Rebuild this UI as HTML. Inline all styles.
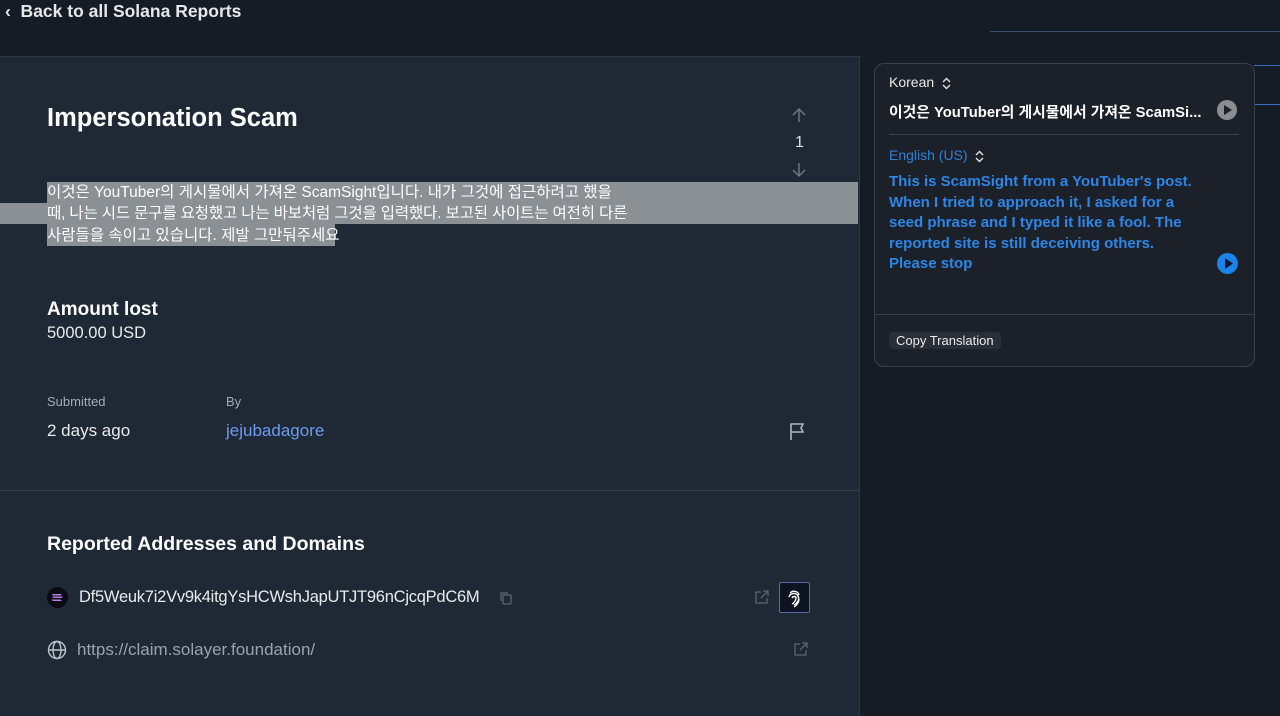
<!DOCTYPE html>
<html><head><meta charset="utf-8"><style>
*{margin:0;padding:0;box-sizing:border-box}
body{width:1280px;height:711px;overflow:hidden;background:#151c25;font-family:"Liberation Sans","Noto Sans CJK KR",sans-serif;color:#fff;position:relative}
.abs{position:absolute}
.card{left:0;top:56px;width:860px;height:660px;background:#1f2935;border-top:1px solid #2c3744;border-right:1px solid #2c3744}
.hl{background:#8b9095;position:absolute}
.ko{font-size:15.5px;color:#fff;white-space:nowrap;line-height:21px}
.pop{left:874px;top:63px;width:381px;height:304px;background:#1c2129;border:1px solid #3a404a;border-radius:10px}
</style></head><body>
<div class="abs" style="left:5px;top:1px;font-size:17.5px;font-weight:bold;color:#e6e8ea">‹&nbsp; Back to all Solana Reports</div>
<div class="abs" style="left:990px;top:31px;width:290px;height:1px;background:#3c4f6e"></div>
<div class="abs" style="left:1254px;top:65px;width:26px;height:1px;background:#3d6fc8"></div>
<div class="abs" style="left:1254px;top:104px;width:26px;height:1px;background:#3d6fc8"></div>
<div class="abs card"></div>
<div class="abs" style="left:47px;top:104px;font-size:25.5px;font-weight:bold">Impersonation Scam</div>
<svg class="abs" style="left:792px;top:107px" width="14" height="16" viewBox="0 0 14 16" fill="none" stroke="#6d7683" stroke-width="1.5"><path d="M7 15V2M1 8l6-6 6 6"/></svg>
<div class="abs" style="left:795px;top:134px;color:#dfe2e6;font-size:16px">1</div>
<svg class="abs" style="left:792px;top:162px" width="14" height="16" viewBox="0 0 14 16" fill="none" stroke="#6d7683" stroke-width="1.5"><path d="M7 1v13M1 8l6 6 6-6"/></svg>
<div class="hl" style="left:47px;top:182px;width:811px;height:21px"></div>
<div class="hl" style="left:0;top:203px;width:858px;height:21px"></div>
<div class="hl" style="left:47px;top:224px;width:288px;height:22px"></div>
<div class="abs ko" style="left:47px;top:182px">이것은 YouTuber의 게시물에서 가져온 ScamSight입니다. 내가 그것에 접근하려고 했을</div>
<div class="abs ko" style="left:47px;top:203px;letter-spacing:-0.15px">때, 나는 시드 문구를 요청했고 나는 바보처럼 그것을 입력했다. 보고된 사이트는 여전히 다른</div>
<div class="abs ko" style="left:47px;top:225px">사람들을 속이고 있습니다. 제발 그만둬주세요</div>
<div class="abs" style="left:47px;top:299px;font-size:19px;font-weight:bold">Amount lost</div>
<div class="abs" style="left:47px;top:324px;font-size:16.5px;color:#e8eaec">5000.00 USD</div>
<div class="abs" style="left:47px;top:394px;font-size:13px;color:#a3abb5">Submitted</div>
<div class="abs" style="left:226px;top:394px;font-size:13px;color:#a3abb5">By</div>
<div class="abs" style="left:47px;top:421px;font-size:17px;color:#e8eaec">2 days ago</div>
<div class="abs" style="left:226px;top:421px;font-size:17px;color:#6b9cf0">jejubadagore</div>
<svg class="abs" style="left:788px;top:421px" width="20" height="20" viewBox="0 0 20 20" fill="none" stroke="#aeb5bf" stroke-width="1.6"><path d="M3 19V3h12l-2 4 2 4H3"/></svg>
<div class="abs" style="left:0;top:490px;width:859px;height:1px;background:#344050"></div>
<div class="abs" style="left:47px;top:533px;font-size:19.5px;font-weight:bold">Reported Addresses and Domains</div>
<svg class="abs" style="left:47px;top:587px" width="21" height="21" viewBox="0 0 21 21"><circle cx="10.5" cy="10.5" r="10.5" fill="#0b0b12"/><path d="M6 7h9l-1.5 1.5h-9zM5 11h9.5l1.5-1.5H6.5zM6 14h9l-1.5-1.5h-9z" fill="#b87ce0"/></svg>
<div class="abs" style="left:79px;top:588px;font-size:16.5px;letter-spacing:-0.25px;color:#e8eaec">Df5Weuk7i2Vv9k4itgYsHCWshJapUTJT96nCjcqPdC6M</div>
<svg class="abs" style="left:498px;top:590px" width="16" height="16" viewBox="0 0 16 16" fill="none" stroke="#5b6573" stroke-width="1.3"><rect x="5" y="5" width="8" height="9" rx="1"/><path d="M3 11V3h7"/></svg>
<svg class="abs" style="left:754px;top:589px" width="16" height="16" viewBox="0 0 16 16" fill="none" stroke="#5b6573" stroke-width="1.3"><path d="M7 3H2v11h11V9M9 2h5v5M14 2L7 9"/></svg>
<div class="abs" style="left:779px;top:582px;width:31px;height:31px;border:1px solid #5a6aa8;background:#0d1320;border-radius:2px"></div>
<svg class="abs" style="left:786px;top:588px" width="18" height="20" viewBox="0 0 18 20" fill="none" stroke="#fff" stroke-width="1.4"><path d="M4 5c3-3 8-2 9 2M3 9c1-4 7-5 9-1s-1 7-4 9M6 10c1-2 4-2 4 0s-2 5-4 6M13 11c0 3-2 6-5 8"/></svg>
<svg class="abs" style="left:47px;top:640px" width="20" height="20" viewBox="0 0 20 20" fill="none" stroke="#bfc5cc" stroke-width="1.4"><circle cx="10" cy="10" r="8.5"/><ellipse cx="10" cy="10" rx="4" ry="8.5"/><path d="M1.5 10h17"/></svg>
<div class="abs" style="left:77px;top:640px;font-size:17px;color:#9aa3ad">https://claim.solayer.foundation/</div>
<svg class="abs" style="left:793px;top:641px" width="16" height="16" viewBox="0 0 16 16" fill="none" stroke="#5b6573" stroke-width="1.3"><path d="M7 3H2v11h11V9M9 2h5v5M14 2L7 9"/></svg>

<div class="abs pop"></div>
<div class="abs" style="left:889px;top:74px;font-size:14px;color:#e8eaec">Korean</div>
<svg class="abs" style="left:942px;top:77px" width="9" height="13" viewBox="0 0 9 13" fill="none" stroke="#ddd" stroke-width="1.5"><path d="M1 5l3.5-3.5L8 5M1 8l3.5 3.5L8 8"/></svg>
<div class="abs" style="left:889px;top:101px;font-size:14.8px;font-weight:bold;color:#fff;white-space:nowrap">이것은 YouTuber의 게시물에서 가져온 ScamSi...</div>
<div class="abs" style="left:1217px;top:100px;width:20px;height:20px;border-radius:50%;background:#8a8e94"></div>
<svg class="abs" style="left:1223px;top:105px" width="10" height="10"><path d="M1 0L9 5L1 10z" fill="#1c2129"/></svg>
<div class="abs" style="left:889px;top:134px;width:350px;height:1px;background:#3a404a"></div>
<div class="abs" style="left:889px;top:147px;font-size:14px;color:#2f7fd8">English (US)</div>
<svg class="abs" style="left:975px;top:150px" width="9" height="13" viewBox="0 0 9 13" fill="none" stroke="#ddd" stroke-width="1.5"><path d="M1 5l3.5-3.5L8 5M1 8l3.5 3.5L8 8"/></svg>
<div class="abs" style="left:889px;top:172px;font-size:15px;font-weight:bold;color:#2b86e8;line-height:20.5px">This is ScamSight from a YouTuber's post.<br>When I tried to approach it, I asked for a<br>seed phrase and I typed it like a fool. The<br>reported site is still deceiving others.<br>Please stop</div>
<div class="abs" style="left:1217px;top:253px;width:21px;height:21px;border-radius:50%;background:#1a84ea"></div>
<svg class="abs" style="left:1224px;top:258px" width="10" height="11"><path d="M1 0L9 5.5L1 11z" fill="#0c1730"/></svg>
<div class="abs" style="left:874px;top:314px;width:381px;height:1px;background:#3a404a"></div>
<div class="abs" style="left:889px;top:332px;padding:1px 7px;background:#2a2f37;border-radius:4px;font-size:13px;color:#e8eaec">Copy Translation</div>
</body></html>
